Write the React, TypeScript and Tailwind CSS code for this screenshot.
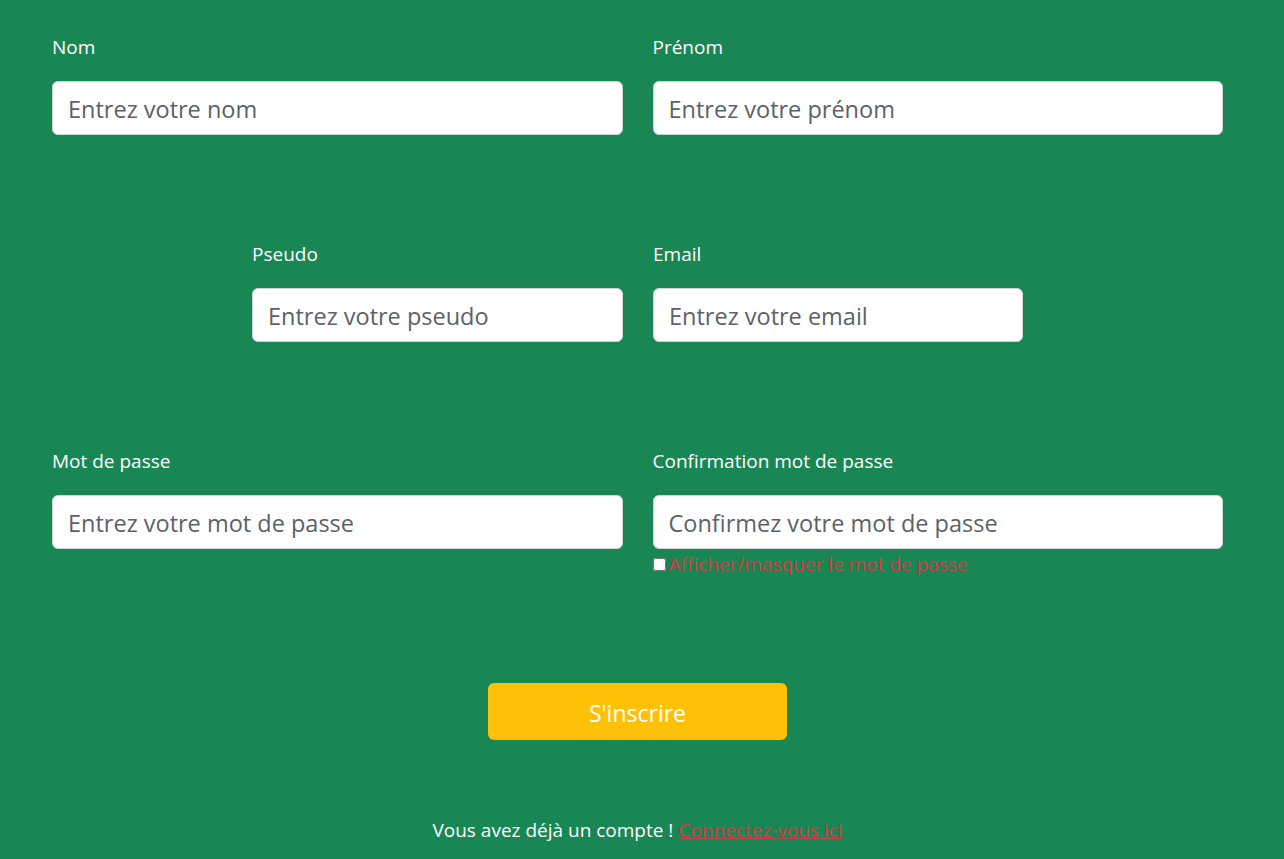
import React from "react";

const font = { fontFamily: '"Open Sans", "Noto Sans", sans-serif' };

function Field({ label, placeholder, type = "text" }: { label: string; placeholder: string; type?: string }) {
  return (
    <div className="flex flex-col">
      <label className="text-white text-[19px] leading-[27px] mb-[20px]">{label}</label>
      <input
        type={type}
        placeholder={placeholder}
        className="h-[54px] w-full rounded-[6px] border border-[#ced4da] bg-white px-[15px] pt-[2px] text-[23.5px] text-[#495057] placeholder:text-[#5c6268] outline-none"
      />
    </div>
  );
}

export default function App() {
  return (
    <div className="min-h-[859px] w-full bg-[#198754]" style={font}>
      <div className="w-[1201px] pl-[37px] box-content pt-[34px]">
        <div className="flex">
          <div className="w-1/2 px-[15px]">
            <Field label="Nom" placeholder="Entrez votre nom" />
          </div>
          <div className="w-1/2 px-[15px]">
            <Field label="Prénom" placeholder="Entrez votre prénom" />
          </div>
        </div>
        <div className="flex mt-[106px]">
          <div className="w-[401px] ml-[200px] px-[15px]">
            <Field label="Pseudo" placeholder="Entrez votre pseudo" />
          </div>
          <div className="w-[400px] px-[15px]">
            <Field label="Email" placeholder="Entrez votre email" type="email" />
          </div>
        </div>
        <div className="flex mt-[106px]">
          <div className="w-1/2 px-[15px]">
            <Field label="Mot de passe" placeholder="Entrez votre mot de passe" type="password" />
          </div>
          <div className="w-1/2 px-[15px]">
            <Field label="Confirmation mot de passe" placeholder="Confirmez votre mot de passe" type="password" />
            <label className="mt-[2px] flex items-center text-[19px] leading-[27px] text-[#dc3545]">
              <input type="checkbox" className="m-0 mr-[3px] h-[13px] w-[13px]" />
              Afficher/masquer le mot de passe
            </label>
          </div>
        </div>
        <div className="flex justify-center mt-[105px]">
          <button className="h-[57px] w-[299px] rounded-[6px] bg-[#ffc107] pt-[3px] text-[23px] text-white">
            S'inscrire
          </button>
        </div>
        <p className="mt-[77px] text-center text-[19px] leading-[27px] text-white">
          Vous avez déjà un compte !{" "}
          <a href="#" className="text-[#dc3545] underline">
            Connectez-vous ici
          </a>
        </p>
      </div>
    </div>
  );
}
